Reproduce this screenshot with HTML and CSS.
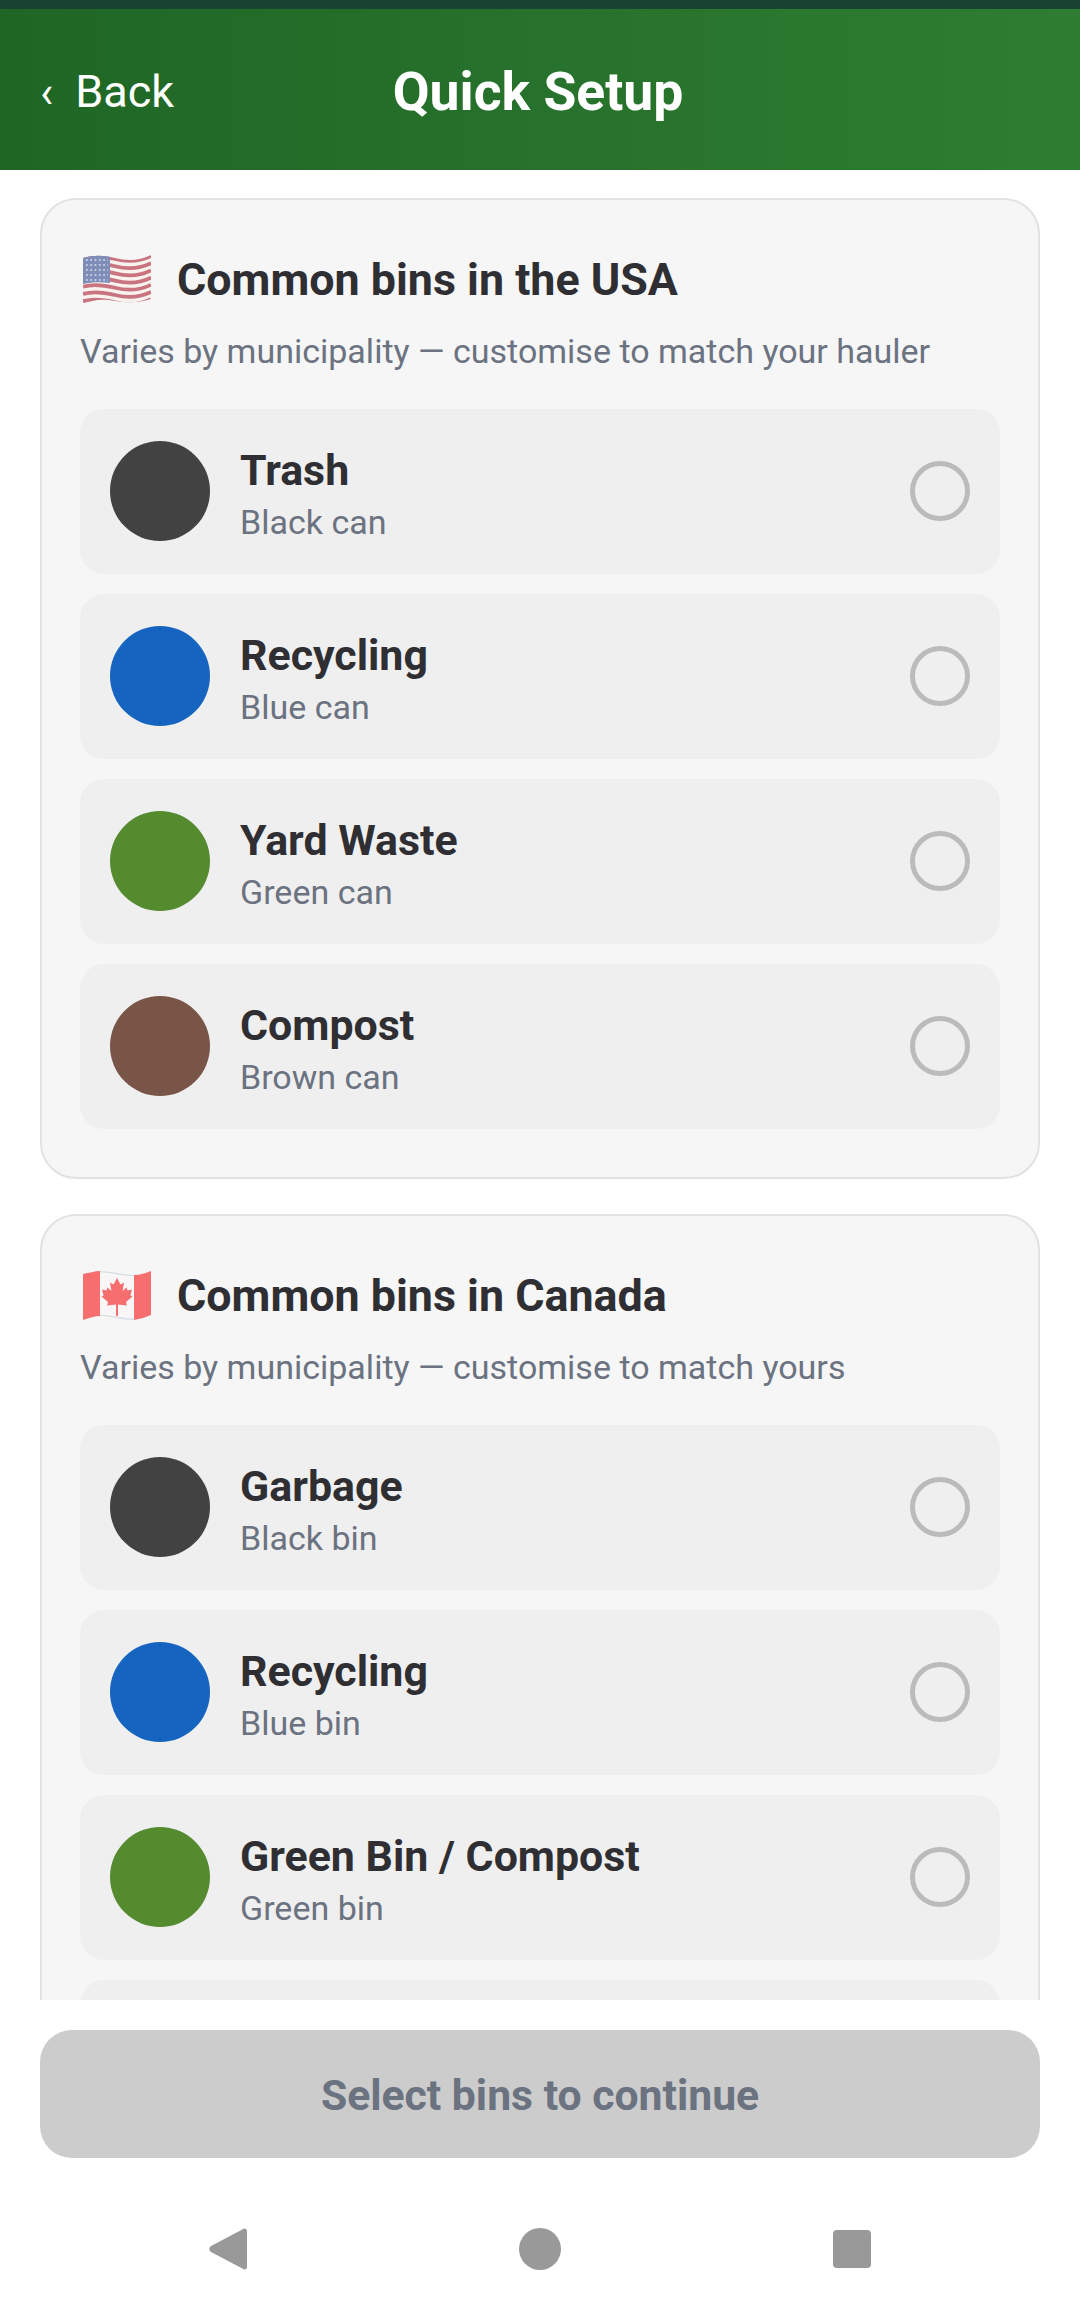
FILE: index.html
```html
<!DOCTYPE html>
<html lang="en">
<head>
    <meta charset="UTF-8">
    <meta name="viewport" content="width=device-width, initial-scale=1.0">
    <title>Quick Setup</title>
    <link rel="stylesheet" href="styles.css">
</head>
<body>
    <div class="app">
        <div class="status-bar"></div>
        <header class="top-bar">
            <div class="back"><span class="back-arrow">‹</span><span>Back</span></div>
            <h1>Quick Setup</h1>
            <div></div>
        </header>

        <main class="scroll">
            <section class="card">
                <div class="card-head">
                    <svg class="flag" viewBox="0 0 68 50">
                        <defs>
                            <path id="us-stripe" d="M0 0C10 -3 20 -2 32 1S56 4 68 -2" fill="none" stroke="#c9747f" stroke-width="3.7"/>
                            <clipPath id="us-shape">
                                <path d="M0 3C10 0 20 0 32 3S56 6 68 0V44C56 48 44 48 32 46S10 44 0 50Z"/>
                            </clipPath>
                        </defs>
                        <g clip-path="url(#us-shape)">
                            <rect width="68" height="50" fill="#f8f3ef"/>
                            <use href="#us-stripe" y="3"/>
                            <use href="#us-stripe" y="10.2"/>
                            <use href="#us-stripe" y="17.4"/>
                            <use href="#us-stripe" y="24.6"/>
                            <use href="#us-stripe" y="31.8"/>
                            <use href="#us-stripe" y="39"/>
                            <use href="#us-stripe" y="46.2"/>
                            <path d="M0 0H27V28C18 27 9 27 0 29Z" fill="#7f8db9"/>
                            <path d="M3 5H25M3 10H25M3 15H25M3 20H25M3 25H25" stroke="#dfe2ee" stroke-width="1.7" stroke-dasharray="1.7 2.6"/>
                        </g>
                    </svg>
                    <h2>Common bins in the USA</h2>
                </div>
                <p class="card-sub">Varies by municipality — customise to match your hauler</p>
                <div class="bin-list">
                    <div class="bin">
                        <span class="dot dot-black"></span>
                        <div class="bin-text"><div class="bin-name">Trash</div><div class="bin-desc">Black can</div></div>
                        <span class="radio"></span>
                    </div>
                    <div class="bin">
                        <span class="dot dot-blue"></span>
                        <div class="bin-text"><div class="bin-name">Recycling</div><div class="bin-desc">Blue can</div></div>
                        <span class="radio"></span>
                    </div>
                    <div class="bin">
                        <span class="dot dot-green"></span>
                        <div class="bin-text"><div class="bin-name">Yard Waste</div><div class="bin-desc">Green can</div></div>
                        <span class="radio"></span>
                    </div>
                    <div class="bin">
                        <span class="dot dot-brown"></span>
                        <div class="bin-text"><div class="bin-name">Compost</div><div class="bin-desc">Brown can</div></div>
                        <span class="radio"></span>
                    </div>
                </div>
            </section>

            <section class="card">
                <div class="card-head">
                    <svg class="flag" viewBox="0 0 68 50">
                        <defs>
                            <clipPath id="ca-shape">
                                <path d="M0 3C6 2 12 0 17 0C28 0 40 4 51 4C57 4 63 2 68 0V44C63 46 57 48 51 49C40 49 28 45 17 45C12 45 6 47 0 49Z"/>
                            </clipPath>
                        </defs>
                        <g clip-path="url(#ca-shape)">
                            <rect width="68" height="50" fill="#f8f6f6"/>
                            <path d="M17 0C28 0 40 4 51 4M17 45C28 45 40 49 51 49" fill="none" stroke="#d5dde3" stroke-width="2.500"/>
                            <rect width="17" height="50" fill="#f76e6e"/>
                            <rect x="51" width="17" height="50" fill="#f76e6e"/>
                            <path d="M34 7L37.5 13.5L41 11.5L39.6 20L43.5 16.5L44.6 19.5L49 18.6L47.4 24.4L49.5 25.5L43 31L43.8 34.5L35 33.5V45H33V33.5L24.2 34.5L25 31L18.5 25.5L20.6 24.4L19 18.6L23.4 19.5L24.5 16.5L28.4 20L27 11.5L30.5 13.5Z" fill="#f76e6e"/>
                        </g>
                    </svg>
                    <h2>Common bins in Canada</h2>
                </div>
                <p class="card-sub">Varies by municipality — customise to match yours</p>
                <div class="bin-list">
                    <div class="bin">
                        <span class="dot dot-black"></span>
                        <div class="bin-text"><div class="bin-name">Garbage</div><div class="bin-desc">Black bin</div></div>
                        <span class="radio"></span>
                    </div>
                    <div class="bin">
                        <span class="dot dot-blue"></span>
                        <div class="bin-text"><div class="bin-name">Recycling</div><div class="bin-desc">Blue bin</div></div>
                        <span class="radio"></span>
                    </div>
                    <div class="bin">
                        <span class="dot dot-green"></span>
                        <div class="bin-text"><div class="bin-name">Green Bin / Compost</div><div class="bin-desc">Green bin</div></div>
                        <span class="radio"></span>
                    </div>
                    <div class="bin"></div>
                </div>
            </section>
        </main>

        <div class="footer">
            <button class="continue">Select bins to continue</button>
        </div>

        <nav class="nav-bar">
            <svg class="nav-icon" viewBox="0 0 38 42"><path d="M38 3V39A2.500 2.500 0 0 1 33.800 40.800L2 24A3.500 3.500 0 0 1 2 18L33.800 1.200A2.500 2.500 0 0 1 38 3Z" fill="#999"/></svg>
            <span class="nav-home"></span>
            <span class="nav-square"></span>
        </nav>
    </div>
</body>
</html>
```

FILE: styles.css
```css
* {
    box-sizing: border-box;
}
body {
    margin: 0;
    background: #fff;
    font-family: Roboto, "Liberation Sans", sans-serif;
}
.app {
    width: 1080px;
    height: 2307px;
    display: flex;
    flex-direction: column;
    overflow: hidden;
}
.status-bar {
    height: 9px;
    background: #1b4332;
}
.top-bar {
    height: 161px;
    padding: 4px 44px 0 40px;
    display: grid;
    grid-template-columns: 1fr auto 1fr;
    align-items: center;
    color: #fff;
    background: linear-gradient(90deg, #1f6625, #2e7d32);
}
.top-bar h1 {
    margin: 0;
    font-size: 53.5px;
    font-weight: 700;
}
.back {
    display: flex;
    align-items: center;
    gap: 22px;
    font-size: 45px;
}
.back-arrow {
    font-size: 44px;
}
.scroll {
    height: 1830px;
    padding: 28px 40px 0;
    overflow: hidden;
    display: flex;
    flex-direction: column;
    gap: 35px;
}
.card {
    flex-shrink: 0;
    padding: 48px 38px 48px;
    background: #f6f6f7;
    border: 2px solid #e2e2e4;
    border-radius: 36px;
}
.card-head {
    display: flex;
    align-items: center;
    gap: 26px;
}
.flag {
    width: 68px;
    height: 50px;
    margin-left: 3px;
}
.card-head h2 {
    margin: 0;
    font-size: 44.8px;
    line-height: 64px;
    font-weight: 700;
    color: #2f2f33;
}
.card-sub {
    margin: 16px 0 35px;
    font-size: 34px;
    line-height: 46px;
    color: #6b7280;
}
.bin-list {
    display: flex;
    flex-direction: column;
    gap: 20px;
}
.bin {
    height: 165px;
    padding: 0 30px 2px;
    display: flex;
    align-items: center;
    gap: 30px;
    background: #efeff0;
    border-radius: 24px;
}
.dot {
    width: 100px;
    height: 100px;
    border-radius: 50%;
}
.dot-black { background: #424242; }
.dot-blue { background: #1565c0; }
.dot-green { background: #558b2f; }
.dot-brown { background: #795548; }
.bin-text {
    flex: 1;
    padding-top: 8px;
}
.bin-name {
    font-size: 42.9px;
    line-height: 52px;
    font-weight: 700;
    color: #2f2f33;
}
.bin-desc {
    margin-top: 3px;
    font-size: 34px;
    line-height: 46px;
    color: #6b7280;
}
.radio {
    width: 60px;
    height: 60px;
    border: 5px solid #bbb;
    border-radius: 50%;
}
.footer {
    padding: 30px 40px 0;
}
.continue {
    width: 100%;
    height: 128px;
    padding-top: 3px;
    border: none;
    border-radius: 32px;
    background: #ccc;
    color: #6b7280;
    font-family: inherit;
    font-size: 42.7px;
    font-weight: 700;
}
.nav-bar {
    flex: 1;
    padding-top: 32px;
    display: flex;
    align-items: center;
    justify-content: center;
    gap: 272px;
}
.nav-icon {
    width: 38px;
    height: 42px;
}
.nav-home {
    width: 42px;
    height: 42px;
    border-radius: 50%;
    background: #999;
}
.nav-square {
    width: 38px;
    height: 38px;
    border-radius: 4px;
    background: #999;
}
```
